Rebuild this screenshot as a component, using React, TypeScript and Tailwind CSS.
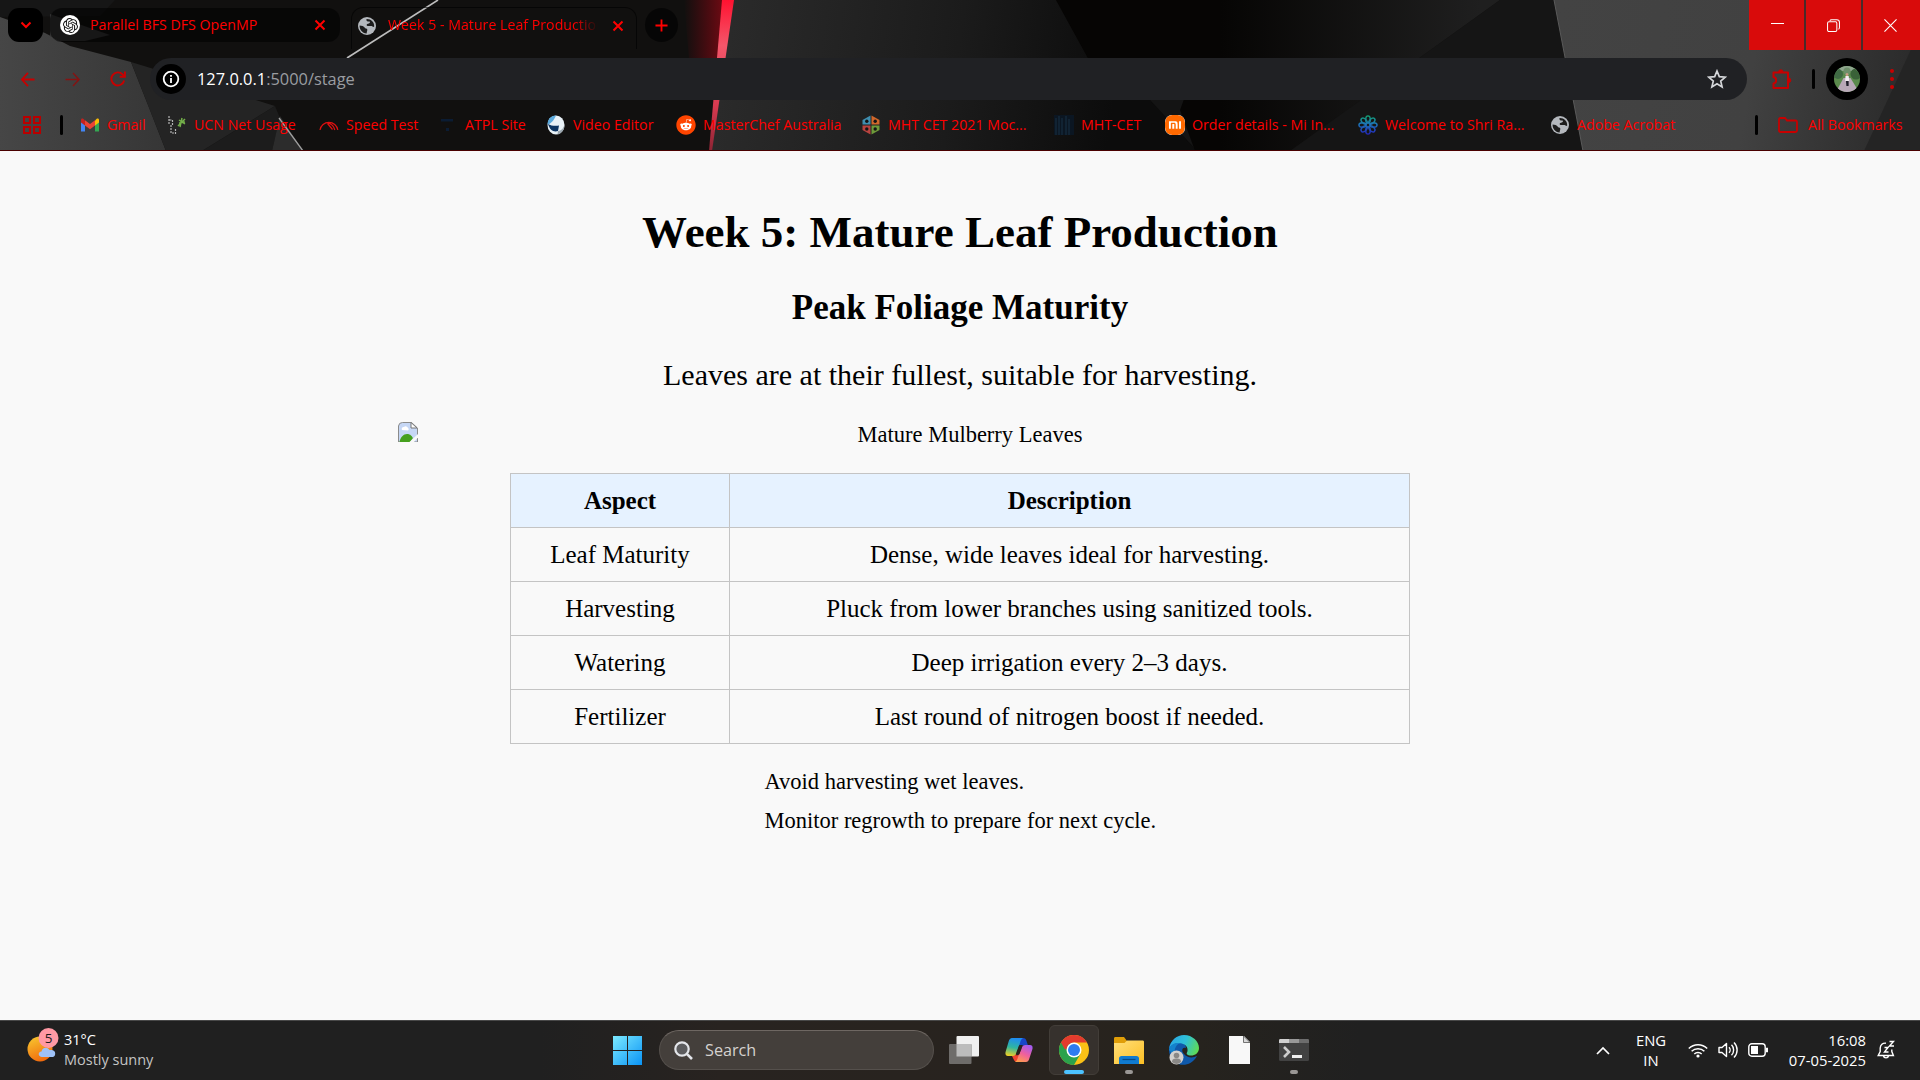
import React from 'react';
import { FaReddit } from 'react-icons/fa';
import { SiXiaomi, SiOpenai } from 'react-icons/si';

function Wallpaper() {
  return (
    <svg className="absolute inset-0 h-full w-full" viewBox="0 0 1920 151" preserveAspectRatio="none">
      <defs>
        <linearGradient id="wl" x1="0" y1="0" x2="1" y2="0">
          <stop offset="0" stopColor="#464646" />
          <stop offset="1" stopColor="#363636" />
        </linearGradient>
        <linearGradient id="wm" gradientUnits="userSpaceOnUse" x1="720" y1="0" x2="1120" y2="60">
          <stop offset="0" stopColor="#2b2b2b" />
          <stop offset="0.6" stopColor="#1b1b1b" />
          <stop offset="1" stopColor="#0c0c0c" />
        </linearGradient>
        <linearGradient id="wr" gradientUnits="userSpaceOnUse" x1="1560" y1="0" x2="1920" y2="60">
          <stop offset="0" stopColor="#434343" />
          <stop offset="0.55" stopColor="#414141" />
          <stop offset="1" stopColor="#2a2a2a" />
        </linearGradient>
        <linearGradient id="wd" gradientUnits="userSpaceOnUse" x1="1220" y1="0" x2="1480" y2="0">
          <stop offset="0" stopColor="#060504" />
          <stop offset="1" stopColor="#1f1f1f" />
        </linearGradient>
        <linearGradient id="glow" x1="0" y1="0" x2="1" y2="0">
          <stop offset="0" stopColor="#a00010" stopOpacity="0" />
          <stop offset="1" stopColor="#b00616" stopOpacity="0.8" />
        </linearGradient>
        <linearGradient id="beam" x1="0" y1="0" x2="0" y2="1">
          <stop offset="0" stopColor="#ff1230" />
          <stop offset="0.3" stopColor="#f4566a" />
          <stop offset="0.7" stopColor="#d83a50" />
          <stop offset="1" stopColor="#8c2434" />
        </linearGradient>
      </defs>
      <rect width="1920" height="151" fill="#11100f" />
      <polygon points="0,17 45,33 70,46 131,62 150,110 166,151 0,151" fill="url(#wl)" />
      <polygon points="0,0 115,0 100,16 0,17" fill="#161616" />
      <polygon points="131,62 275,106 202,151 166,151" fill="#242424" />
      <polygon points="275,106 280,118 272,151 202,151" fill="#1c1c1c" />
      <polygon points="280,116 303,151 272,151" fill="#2c2c2c" />
      <polygon points="50,14 110,35 85,41 60,41 50,36" fill="#333333" />
      <path d="M438 0 L347 58" stroke="#bdbdbd" strokeWidth="1.6" />
      <path d="M279 118 L303 151" stroke="#a0a0a0" strokeWidth="1.3" />
      <polygon points="728,0 1056,0 1090,62 1150,100 1197,151 711,151" fill="url(#wm)" />
      <polygon points="1056,0 1330,0 1230,151 1197,151 1150,100 1090,62" fill="#060504" />
      <polygon points="1150,100 1270,60 1290,151 1197,151" fill="#141414" />
      <polygon points="1220,0 1500,0 1290,151 1195,151 1180,110" fill="url(#wd)" />
      <polygon points="1500,0 1554,0 1583,151 1290,151" fill="#151515" />
      <polygon points="1554,0 1920,0 1920,151 1583,151" fill="url(#wr)" />
      <polygon points="1920,30 1920,151 1864,151" fill="#242424" />
      <path d="M1554 0 L1583 151" stroke="#5a5a5a" strokeWidth="1" />
      <polygon points="684,0 724,0 717,70 690,70" fill="url(#glow)" opacity="0.75" />
      <polygon points="722,0 734,0 712,151 709,151" fill="url(#beam)" />
    </svg>
  );
}

function X({ className = '' }: { className?: string }) {
  return (
    <svg viewBox="0 0 12 12" className={`h-3 w-3 shrink-0 ${className}`} fill="none" stroke="#f00" strokeWidth="2">
      <path d="M1.5 1.5l9 9M10.5 1.5l-9 9" />
    </svg>
  );
}

function Globe() {
  return (
    <svg viewBox="0 0 20 20" className="h-5 w-5 shrink-0">
      <circle cx="10" cy="10" r="9" fill="#b4b8bd" />
      <path d="M2.6 9.4c2 .2 4.4.6 5 2 .5 1.300 2.400.6 2.700 2 .2 1.400-.8 2.600-.6 4.100C5 17 2.300 13 2.600 9.400zM9.500 3c-.5 2 1 2.600 2.600 2.500 1.600 0 .8 2-1 2.200-1.600.2-2 1.700-.6 2.200 2 .6 3.800-.6 5 .6.6.6 1.200.5 1.700.1C17.500 6 14 2.800 9.500 3z" fill="#1c1c1c" />
    </svg>
  );
}

const Sep = ({ className = '' }: { className?: string }) => (
  <div className={`w-[3px] shrink-0 rounded-full bg-black ${className}`} />
);

function TabStrip() {
  return (
    <div className="relative flex h-[50px] items-start pl-2 pt-2">
      <div className="flex h-[34px] w-[35px] items-center justify-center rounded-[11px] bg-black">
        <svg viewBox="0 0 12 8" className="h-2 w-3" fill="none" stroke="#f00" strokeWidth="2">
          <path d="M1.500 1.500L6 6l4.500-4.500" />
        </svg>
      </div>
      <div className="ml-[7px] flex h-[34px] w-[290px] items-center rounded-xl bg-black/55 pl-[10px]">
        <div className="flex h-5 w-5 items-center justify-center rounded-full bg-white">
          <SiOpenai size={15} color="#111" />
        </div>
        <span className="ml-[10px] w-[224px] whitespace-nowrap text-[14.200px]">Parallel BFS DFS OpenMP</span>
        <X />
      </div>
      <div className="ml-[11px] -mt-px flex h-[42px] w-[286px] items-start rounded-t-xl border-x border-t border-black/60 pt-2">
        <div className="ml-[5px]">
          <Globe />
        </div>
        <div className="-mt-px ml-[11px] w-[211px] overflow-hidden whitespace-nowrap text-[14.200px] leading-5 [mask-image:linear-gradient(to_right,black_185px,transparent_210px)]">
          Week 5 - Mature Leaf Production
        </div>
        <X className="ml-[13px] mt-1" />
      </div>
      <div className="ml-2 flex h-[34px] w-[33px] items-center justify-center rounded-full bg-black/60">
        <svg viewBox="0 0 14 14" className="h-[13px] w-[13px]" stroke="#f00" strokeWidth="2">
          <path d="M7 .5v13M.5 7h13" />
        </svg>
      </div>
      <div className="-mt-2 ml-auto flex h-[50px] gap-[2px] bg-[#4a2a2a] text-white">
        <div className="flex w-[55px] items-center justify-center bg-[#d90b0b]">
          <div className="-mt-1 ml-[2px] h-px w-[13px] bg-white" />
        </div>
        <div className="flex w-[55px] items-center justify-center bg-[#d90b0b] pr-px">
          <svg viewBox="0 0 14 14" className="h-[13px] w-[13px]" fill="none" stroke="#fff" strokeWidth="1.100">
            <rect x="0.600" y="3" width="10" height="10.400" rx="1.500" />
            <path d="M3 1.800C3.400 1 4 .7 5 .7h5.500C12.500.700 13.400 1.600 13.400 3.500V9c0 1.200-.3 1.800-1 2.200" />
          </svg>
        </div>
        <div className="flex w-[57px] items-center justify-center bg-[#d90b0b] pr-[2px]">
          <svg viewBox="0 0 14 14" className="h-[13px] w-[13px]" stroke="#fff" strokeWidth="1.200">
            <path d="M.5.5l13 13M13.500.5l-13 13" />
          </svg>
        </div>
      </div>
    </div>
  );
}

function Toolbar() {
  return (
    <div className="relative flex h-[58px] items-center pl-5">
      <svg viewBox="0 0 16 16" className="h-[15px] w-4" fill="none" stroke="#c80000" strokeWidth="1.900">
        <path d="M8 1L1.500 8 8 15M1.500 8H15" />
      </svg>
      <svg viewBox="0 0 16 16" className="ml-[29px] h-[15px] w-4" fill="none" stroke="#861212" strokeWidth="1.500">
        <path d="M8 1l6.500 7L8 15M14.500 8H0" />
      </svg>
      <svg viewBox="0 0 16 16" className="ml-[29px] h-4 w-4" fill="none" stroke="#c80000" strokeWidth="1.900">
        <path d="M14.200 9.500A6.500 6.500 0 1 1 12.600 3.400L14.300 5.200M14.900 .5V5.700H9.700" />
      </svg>
      <div className="ml-6 flex h-[42px] w-[1597px] items-center rounded-full bg-[#202124] pl-[6px] pr-5">
        <div className="flex h-[30px] w-[30px] items-center justify-center rounded-full bg-black">
          <svg viewBox="0 0 18 18" className="h-[18px] w-[18px]" fill="none" stroke="#fff" strokeWidth="1.800">
            <circle cx="9" cy="9" r="7.300" />
            <path d="M9 8v5M9 5v1.800" />
          </svg>
        </div>
        <div className="ml-[11px] pt-px text-[16.400px] text-[#9a9da1]">
          <span className="text-white">127.0.0.1</span>:5000/stage
        </div>
        <svg viewBox="0 0 20 20" className="ml-auto h-5 w-5" fill="none" stroke="#d5d7da" strokeWidth="1.700">
          <path d="M10 2l2.300 5.600 6 .5-4.600 3.900 1.400 5.900L10 14.800l-5.100 3.100L6.300 12 1.700 8.100l6-.5z" />
        </svg>
      </div>
      <svg viewBox="0 0 22 22" className="ml-[24px] h-[22px] w-[22px]" fill="none" stroke="#c80000" strokeWidth="2">
        <path d="M2.500 4.500H17V20H2.500v-4.500c3.500-.5 3.500-6 0-6.500z" strokeLinejoin="round" />
        <path d="M7.500 4a2.300 2.300 0 0 1 4.600 0zM17.500 10a2.300 2.300 0 0 1 0 4.600z" fill="#c80000" strokeWidth="0.800" />
      </svg>
      <Sep className="ml-[19px] h-5" />
      <div className="ml-[11px] flex h-[42px] w-[42px] items-center justify-center rounded-full bg-black">
        <svg viewBox="0 0 26 26" className="h-[26px] w-[26px]">
          <defs>
            <clipPath id="av">
              <circle cx="13" cy="13" r="13" />
            </clipPath>
          </defs>
          <g clipPath="url(#av)">
            <rect width="26" height="26" fill="#5b8a4d" />
            <rect width="26" height="5" fill="#8fa58e" />
            <circle cx="4" cy="8" r="5" fill="#3f6a44" />
            <circle cx="22" cy="8" r="5.500" fill="#3a6138" />
            <circle cx="13" cy="5" r="3.500" fill="#6d8f6a" />
            <path d="M9.500 12h7L25 26H2z" fill="#b9a9b8" />
            <circle cx="13" cy="8.500" r="1.500" fill="#c89c84" />
            <path d="M11.500 10h3.200l.5 5h-4z" fill="#f3eef2" />
            <path d="M12 15h2.600v5h-2.200z" fill="#20202c" />
          </g>
        </svg>
      </div>
      <div className="ml-[22px] flex flex-col gap-1">
        <i className="h-1 w-1 rounded-full bg-[#c80000]" />
        <i className="h-1 w-1 rounded-full bg-[#c80000]" />
        <i className="h-1 w-1 rounded-full bg-[#c80000]" />
      </div>
    </div>
  );
}

const box = 'h-5 w-5 shrink-0';

const GmailIcon = () => (
  <svg viewBox="0 0 20 20" className={box}>
    <path d="M1 5v11.500h4V9.500z" fill="#4285f4" />
    <path d="M19 5v11.500h-4V9.500z" fill="#34a853" />
    <path d="M15 5.500v5L19 7.500V5c0-2-2-2.500-4 .5z" fill="#fbbc04" />
    <path d="M1 5v2.500l4 3v-5C3 2.500 1 3 1 5z" fill="#c5221f" />
    <path d="M5 5.200v5.300l5 3.700 5-3.700V5.200L10 9z" fill="#ea4335" />
  </svg>
);
const UcnIcon = () => (
  <svg viewBox="0 0 20 20" className={box} fill="none">
    <path d="M2 1v8M2.500 5h3v5M4 10v8h3M8.500 14v5" stroke="#b4b4b4" strokeWidth="1.200" strokeDasharray="2 1" />
    <path d="M15 3l-2 9M12 5l6 4M18 4l-7 7M12 8l6-1" stroke="#74b04a" strokeWidth="1.500" />
  </svg>
);
const SpeedIcon = () => (
  <svg viewBox="0 0 20 20" className={box} fill="none" stroke="#e01010" strokeWidth="1.200">
    <path d="M1 15a9 9 0 0 1 17.800 0M9 8c4 1 6 3.500 6.800 7M8.500 8.500l5 6" />
  </svg>
);
const AtplIcon = () => (
  <svg viewBox="0 0 20 20" className={box} fill="#0b1c33">
    <path d="M3 4h12v2.500H3zM8 13h3v3H8z" />
  </svg>
);
const HelmetIcon = () => (
  <svg viewBox="0 0 20 20" className={box}>
    <ellipse cx="10" cy="10" rx="8.500" ry="9.500" fill="#e8f1f7" />
    <path d="M10 .5C4 .500 1.500 5 1.500 9.500 5 9 8 5 10 .5z" fill="#5aa9dc" />
    <path d="M2 9c3 2 8 2 11 1.500l-1 5.500c-4 1.500-8-.5-10-7z" fill="#0d3563" />
    <path d="M12 16c4-.5 6-3.500 6.500-7 .5 5-2.500 9.500-7 10.500z" fill="#9aa6ae" />
  </svg>
);
const RedditIcon = () => (
  <div className="h-5 w-5 shrink-0 rounded-full bg-[radial-gradient(circle,white_0_9px,transparent_9px)]">
    <FaReddit size={20} color="#ff4500" />
  </div>
);
const HexIcon = () => (
  <svg viewBox="0 0 20 20" className={box}>
    <path d="M9.500.5L1.500 5v4.500h8z" fill="#3f8fb0" />
    <path d="M10.500.5l8 4.500v4.500h-8z" fill="#d0672b" />
    <path d="M9.500 19.500l-8-4.500v-4.500h8z" fill="#b8433f" />
    <path d="M10.500 19.500l8-4.500v-4.500h-8z" fill="#6e9a3a" />
    <g fill="#141414">
      <circle cx="5.800" cy="6.300" r="1.700" />
      <circle cx="14.200" cy="6.300" r="1.700" />
      <circle cx="5.800" cy="14" r="1.700" />
      <circle cx="14.200" cy="14" r="1.700" />
    </g>
  </svg>
);
const BuildingIcon = () => (
  <svg viewBox="0 0 20 20" className={box}>
    <rect width="20" height="20" fill="#0b1622" />
    <path d="M2 3v17M5 1v19M8 3v17M12 1v19M15 4v16" stroke="#15283a" strokeWidth="1.500" />
  </svg>
);
const MiIcon = () => (
  <div className="flex h-5 w-5 shrink-0 items-center justify-center overflow-hidden rounded-[7px] bg-white">
    <SiXiaomi size={20} color="#ff6900" />
  </div>
);
const ShriIcon = () => (
  <svg viewBox="0 0 20 20" className={box} fill="none" strokeWidth="1.500">
    <defs>
      <linearGradient id="sh" gradientUnits="userSpaceOnUse" x1="0" y1="0" x2="0" y2="20">
        <stop offset="0" stopColor="#12a36a" />
        <stop offset="0.450" stopColor="#1d76b8" />
        <stop offset="1" stopColor="#2420b8" />
      </linearGradient>
      <mask id="petals">
        <g stroke="#fff" fill="none" strokeWidth="1.400">
          {[0, 45, 90, 135, 180, 225, 270, 315].map((a) => (
            <ellipse key={a} cx="10" cy="4.500" rx="2.300" ry="3.600" transform={`rotate(${a} 10 10)`} />
          ))}
        </g>
      </mask>
    </defs>
    <rect width="20" height="20" fill="url(#sh)" mask="url(#petals)" />
  </svg>
);

const bookmarks: { w: string; label: string; icon: React.ReactNode }[] = [
  { w: 'w-[87px]', label: 'Gmail', icon: <GmailIcon /> },
  { w: 'w-[152px]', label: 'UCN Net Usage', icon: <UcnIcon /> },
  { w: 'w-[119px]', label: 'Speed Test', icon: <SpeedIcon /> },
  { w: 'w-[108px]', label: 'ATPL Site', icon: <AtplIcon /> },
  { w: 'w-[130px]', label: 'Video Editor', icon: <HelmetIcon /> },
  { w: 'w-[185px]', label: 'MasterChef Australia', icon: <RedditIcon /> },
  { w: 'w-[193px]', label: 'MHT CET 2021 Moc...', icon: <HexIcon /> },
  { w: 'w-[111px]', label: 'MHT-CET', icon: <BuildingIcon /> },
  { w: 'w-[193px]', label: 'Order details - Mi In...', icon: <MiIcon /> },
  { w: 'w-[192px]', label: 'Welcome to Shri Ra...', icon: <ShriIcon /> },
  { w: 'w-[140px]', label: 'Adobe Acrobat', icon: <Globe /> },
];

function Bookmarks() {
  return (
    <div className="relative flex h-[43px] items-center border-b border-[#4a0000] pb-[8px] pl-[23px] text-[14.200px]">
      <svg viewBox="0 0 18 18" className="h-[18px] w-[18px]" fill="none" stroke="#b80000" strokeWidth="2">
        <path d="M1 1h6v6H1zM11 1h6v6h-6zM1 11h6v6H1zM11 11h6v6h-6z" />
      </svg>
      <Sep className="ml-[19px] mr-[17px] h-5" />
      {bookmarks.map((b) => (
        <div key={b.label} className={`flex shrink-0 items-center gap-[7px] whitespace-nowrap ${b.w}`}>
          {b.icon}
          <span className="pb-px">{b.label}</span>
        </div>
      ))}
      <Sep className="ml-[65px] mr-[20px] h-5" />
      <svg viewBox="0 0 20 16" className="h-4 w-5" fill="none" stroke="#c80000" strokeWidth="1.800">
        <path d="M1 2.500C1 1.500 1.500 1 2.500 1H7l2 2.500h8.500c1 0 1.500.5 1.500 1.500v8.500c0 1-.5 1.500-1.500 1.500h-15C1.500 15 1 14.500 1 13.500z" />
      </svg>
      <span className="ml-[10px] whitespace-nowrap pb-px">All Bookmarks</span>
    </div>
  );
}

const rows = [
  ['Leaf Maturity', 'Dense, wide leaves ideal for harvesting.'],
  ['Harvesting', 'Pluck from lower branches using sanitized tools.'],
  ['Watering', 'Deep irrigation every 2–3 days.'],
  ['Fertilizer', 'Last round of nitrogen boost if needed.'],
];

function Page() {
  return (
    <main className="flex flex-1 flex-col items-center bg-[#f9f9f9] pt-[55px] font-['Liberation_Serif',serif] text-black">
      <h1 className="text-[45px] font-bold leading-[52px]">Week 5: Mature Leaf Production</h1>
      <h2 className="mt-[30px] text-[35px] font-bold leading-10">Peak Foliage Maturity</h2>
      <p className="mt-[30px] text-[30px] leading-[34px]">Leaves are at their fullest, suitable for harvesting.</p>
      <div className="mt-[30px] flex h-[26px] w-[1124px] items-start">
        <svg viewBox="0 0 20 20" className="h-5 w-5">
          <path d="M.5 20V4a4 4 0 0 1 4-3.500h9l6 5.500v14z" fill="#c6d7f5" stroke="#8b8b8b" strokeWidth="1" />
          <path d="M4 8a2 2 0 0 1 2-3 2.500 2.500 0 0 1 4 1 1.500 1.500 0 0 1 0 2.500z" fill="#fff" />
          <path d="M1.500 20c1-5 4-8 7.500-8s5 2.500 6 4l-3 4z" fill="#46a01e" />
          <path d="M11 20.500L20 12v3.500l-4.500 5z" fill="#f9f9f9" />
          <path d="M13 .5V6h6z" fill="#fff" stroke="#777" strokeWidth="1" />
        </svg>
        <span className="flex-1 text-center text-[22.500px] leading-[26px]">Mature Mulberry Leaves</span>
      </div>
      <div className="mt-[25px] w-[900px] border-x border-t border-[#c4c4c4] text-center text-[25px] leading-[53px]">
        <div className="flex border-b border-[#c4c4c4] bg-[#e6f2ff] font-bold">
          <div className="w-[219px] border-r border-[#c4c4c4]">Aspect</div>
          <div className="flex-1">Description</div>
        </div>
        {rows.map(([a, d]) => (
          <div key={a} className="flex border-b border-[#c4c4c4]">
            <div className="w-[219px] border-r border-[#c4c4c4]">{a}</div>
            <div className="flex-1">{d}</div>
          </div>
        ))}
      </div>
      <ul className="mt-[18px] w-[391px] whitespace-nowrap text-[22.500px] leading-[39px]">
        <li>Avoid harvesting wet leaves.</li>
        <li>Monitor regrowth to prepare for next cycle.</li>
      </ul>
    </main>
  );
}

const CopilotIcon = () => (
  <svg viewBox="0 0 28 26" className="h-[26px] w-7">
    <defs>
      <linearGradient id="c1" x1="0.400" y1="0" x2="0.200" y2="1">
        <stop offset="0" stopColor="#1f8df0" />
        <stop offset="0.500" stopColor="#2fb6a0" />
        <stop offset="1" stopColor="#f3d021" />
      </linearGradient>
      <linearGradient id="c2" x1="0.700" y1="0" x2="0.200" y2="1">
        <stop offset="0" stopColor="#a45cf0" />
        <stop offset="0.500" stopColor="#f0609c" />
        <stop offset="1" stopColor="#ffa04a" />
      </linearGradient>
    </defs>
    <path d="M13 1h5c2 0 3 1 3.500 3l1.500 4.500h-9z" fill="#1746c9" />
    <path d="M6 17h8l1 8h-3c-2 0-3-1.500-3.500-3z" fill="#f0452f" />
    <path d="M7 1h11c-2 1-2.500 3-3 5l-3.500 9c-.6 2.500-1.500 4-4 4H3c-2.500 0-3-2-2.300-4.500L3.500 5C4.300 2 5.500 1 7 1z" fill="url(#c1)" />
    <path d="M21 25H10c2-1 2.500-3 3-5l3.500-8c.6-2.500 1.500-4 4-4H25c2.500 0 3 2 2.300 4.500L24.500 21c-.8 3-2 4-3.500 4z" fill="url(#c2)" />
    <path d="M14.500 8h3.200c-1 1-1.300 2.500-1.700 4l-1.500 4.500c-.4 1-1 1.700-2 1.700h-2c1-1 1.200-2 1.600-3.200l1.600-5c.2-.8.400-1.400.8-2z" fill="#28231e" />
  </svg>
);
const ChromeIcon = () => (
  <svg viewBox="0 0 30 30" className="h-[30px] w-[30px]">
    <circle cx="15" cy="15" r="15" fill="#fbc116" />
    <path d="M2 7.500A15 15 0 0 0 15 30l6.500-11.200L15 15 15 7.500z" fill="#2ba24c" />
    <path d="M2 7.500A15 15 0 0 1 28 7.500H15c-4 0-7 3-7.300 6.500L6 14.400z" fill="#e33b2e" />
    <circle cx="15" cy="15" r="7.500" fill="#fff" />
    <circle cx="15" cy="15" r="6" fill="#2e7cf0" />
  </svg>
);
const FolderIcon = () => (
  <svg viewBox="0 0 30 27" className="h-[27px] w-[30px]">
    <defs>
      <linearGradient id="fo" x1="0" y1="0" x2="1" y2="1">
        <stop offset="0" stopColor="#ffdf7a" />
        <stop offset="1" stopColor="#fcbf24" />
      </linearGradient>
    </defs>
    <path d="M0 1.500C0 .5.500 0 1.500 0H10l3 4v4H0z" fill="#e09e08" />
    <path d="M0 6h10.500L13 3.500h15.500c1 0 1.500.5 1.500 1.500v22H0z" fill="url(#fo)" />
    <path d="M5 27v-5.500C5 20 6 19 7.500 19h15c1.500 0 2.500 1 2.500 2.500V27z" fill="#107bd0" />
    <path d="M8.500 22.500h13" stroke="#074a86" strokeWidth="1.200" />
  </svg>
);
const EdgeIcon = () => (
  <svg viewBox="0 0 30 30" className="h-[30px] w-[30px]">
    <defs>
      <linearGradient id="e1" x1="0" y1="0.300" x2="1" y2="0.600">
        <stop offset="0" stopColor="#2aa7e4" />
        <stop offset="0.500" stopColor="#2fc0d8" />
        <stop offset="1" stopColor="#5fdc55" />
      </linearGradient>
    </defs>
    <path d="M0 15C0 8 4 5 9 6c5 .5 8 4 8 7-4-1.500-5 3-2 6 3 3.500 8 4.500 13 2C24 28 18 30.500 12 29.700 5 28.500 0 22 0 15z" fill="#0f59ab" />
    <path d="M.2 13.500C1.500 5 8 0 15 0c8.500 0 15 6.500 15 13 0 5-4 7.500-8 7.500-3.500 0-5-1.500-4-3 1.500-2.500.5-8-6-9.200C7 7.500 2 9.500.2 13.500z" fill="url(#e1)" />
    <path d="M0 15c1-5.500 6-8 11-6.800-5 1.800-7 8-4 14z" fill="#1482cc" />
    <circle cx="7.500" cy="22.500" r="7" fill="#d2d0ce" />
    <circle cx="7.500" cy="20.500" r="2.800" fill="#8a8886" />
    <path d="M3 27c0-3 2-3.500 4.500-3.500S12 24 12 27c-2.500 2.500-6.500 2.500-9 0z" fill="#8a8886" />
  </svg>
);
const FileIcon = () => (
  <svg viewBox="0 0 21 28" className="h-7 w-[21px]">
    <path d="M0 0h15l6 6v22H0z" fill="#f8f8f8" />
    <path d="M14.500 0v6.500H21z" fill="#d8d8d8" stroke="#555" strokeWidth="0.800" />
  </svg>
);
const TerminalIcon = () => (
  <svg viewBox="0 0 30 22" className="h-[22px] w-[30px]">
    <rect width="30" height="22" rx="1.500" fill="#424242" />
    <path d="M0 4V1.500C0 .5.500 0 1.500 0H10v4z" fill="#d0d0d0" />
    <path d="M10 0h10v4H10z" fill="#999" />
    <path d="M20 0h8.500c1 0 1.500.5 1.500 1.500V4H20z" fill="#6d6d6d" />
    <path d="M5 8l5 5-5 5" fill="none" stroke="#ccc" strokeWidth="2.600" />
    <path d="M13 17.500h10" stroke="#f0f0f0" strokeWidth="3" />
  </svg>
);

function TaskItem({ children, state = '' }: { children: React.ReactNode; state?: string }) {
  return (
    <div
      className={`relative flex h-[50px] w-[50px] shrink-0 items-center justify-center rounded-md ${
        state === 'active' ? 'border border-[#423d38] bg-[#36312d]' : ''
      }`}
    >
      {children}
      {state === 'active' && <i className="absolute bottom-0 h-1 w-5 rounded-full bg-[#4cc2ff]" />}
      {state === 'open' && <i className="absolute bottom-px h-1 w-2 rounded-full bg-[#9a9795]" />}
    </div>
  );
}

function Taskbar() {
  return (
    <footer className="flex h-[60px] shrink-0 items-center border-t border-[#484848] bg-[linear-gradient(90deg,#202020_0,#202020_540px,#282320_720px,#28231e_1080px,#26231e_1200px,#202020_1360px)] pb-px text-white">
      <div className="flex w-[610px] items-center pl-[27px]">
        <div className="relative -mt-1 h-[40px] w-[34px]">
          <svg viewBox="0 0 34 40" className="h-full w-full">
            <defs>
              <linearGradient id="sun" x1="0.200" y1="0" x2="0.600" y2="1">
                <stop offset="0" stopColor="#f8c52e" />
                <stop offset="1" stopColor="#f0680c" />
              </linearGradient>
            </defs>
            <circle cx="13" cy="21" r="12.500" fill="url(#sun)" />
            <path d="M15 29c-4-.5-4.500-5-.5-5.500C15 19.500 20 18 22.500 22c4-.5 6.500 1.500 5.500 5-.5 1.500-1.500 2-3 2z" fill="#9fc2f7" />
            <circle cx="21.500" cy="10" r="10" fill="#ff99a4" />
          </svg>
          <span className="absolute left-[11px] top-0 w-[21px] text-center text-[13.500px] leading-5 text-[#1a1a1a]">5</span>
        </div>
        <div className="ml-[3px] text-[14.500px] leading-5">
          <div>31°C</div>
          <div className="text-[#c4c4c4]">Mostly sunny</div>
        </div>
      </div>
      <svg viewBox="0 0 29 29" className="ml-[3px] h-[29px] w-[29px] shrink-0">
        <defs>
          <linearGradient id="win" gradientUnits="userSpaceOnUse" x1="0" y1="0" x2="29" y2="29">
            <stop offset="0" stopColor="#7ceaff" />
            <stop offset="1" stopColor="#0a93f5" />
          </linearGradient>
        </defs>
        <path d="M0 0h14v14H0zM15 0h14v14H15zM0 15h14v14H0zM15 15h14v14H15z" fill="url(#win)" />
      </svg>
      <div className="ml-[17px] flex h-10 w-[275px] shrink-0 items-center rounded-full border border-[#55504c] border-t-[#6e6762] bg-[#443f3b] pl-[14px]">
        <svg viewBox="0 0 19 19" className="h-[19px] w-[19px]" fill="none" stroke="#e4e6ea" strokeWidth="2.200">
          <circle cx="8" cy="8" r="6.700" fill="#5c5c5e" />
          <path d="M12.800 12.800L18 18" strokeWidth="2.600" />
        </svg>
        <span className="ml-3 pt-px text-[16.200px] text-[#d5d2cf]">Search</span>
      </div>
      <div className="ml-[5px] flex items-center gap-[5px]">
        <TaskItem>
          <svg viewBox="0 0 30 28" className="h-7 w-[30px]">
            <rect x="7.500" y="0" width="22.500" height="20.500" rx="1" fill="#f0f0f0" />
            <rect x="0" y="8" width="22.500" height="20" rx="1" fill="#6e6c6a" />
            <rect x="7.500" y="8" width="15" height="12.500" fill="#bcbcbc" />
          </svg>
        </TaskItem>
        <TaskItem><CopilotIcon /></TaskItem>
        <TaskItem state="active"><ChromeIcon /></TaskItem>
        <TaskItem state="open"><FolderIcon /></TaskItem>
        <TaskItem><EdgeIcon /></TaskItem>
        <TaskItem><FileIcon /></TaskItem>
        <TaskItem state="open"><TerminalIcon /></TaskItem>
      </div>
      <div className="ml-auto flex items-center pr-[25px] text-[14.800px] leading-5">
        <svg viewBox="0 0 14 9" className="h-[9px] w-[14px]" fill="none" stroke="#fff" strokeWidth="1.700">
          <path d="M1 8l6-6 6 6" />
        </svg>
        <div className="-mt-px ml-[24px] w-[34px] text-center">
          <div>ENG</div>
          <div>IN</div>
        </div>
        <svg viewBox="0 0 20 16" className="ml-[20px] h-4 w-5" fill="none" stroke="#fff" strokeWidth="1.500">
          <path d="M.8 6.500a13 13 0 0 1 18.400 0M3.600 9.300a9 9 0 0 1 12.800 0M6.300 12a5.300 5.300 0 0 1 7.400 0" />
          <circle cx="10" cy="14" r="1.600" fill="#fff" stroke="none" />
        </svg>
        <svg viewBox="0 0 20 18" className="ml-[10px] h-[18px] w-5" fill="none" stroke="#fff" strokeWidth="1.400">
          <path d="M1 6.500h3L8.500 2.500v13L4 11.500H1z" strokeLinejoin="round" />
          <path d="M11 6.200a4 4 0 0 1 0 5.600M13.500 3.800a7.400 7.400 0 0 1 0 10.400M16 1.500a10.600 10.600 0 0 1 0 15" />
        </svg>
        <svg viewBox="0 0 20 14" className="ml-[10px] h-[14px] w-5" fill="none" stroke="#fff" strokeWidth="1.400">
          <rect x="0.800" y="0.800" width="16.400" height="12.400" rx="3" />
          <rect x="3" y="3" width="7" height="8" fill="#fff" stroke="none" />
          <path d="M19 4.800v4.400" strokeWidth="2" />
        </svg>
        <div className="-mt-px ml-[20px] w-[78px] whitespace-nowrap text-right">
          <div>16:08</div>
          <div>07-05-2025</div>
        </div>
        <svg viewBox="0 0 18 20" className="ml-[11px] h-5 w-[18px]" fill="none" stroke="#fff" strokeWidth="1.400">
          <path d="M9 3.200C5.500 2.800 3.500 5 3.200 8v3.500L1.200 15.500h15.200l-1.600-4V9.500M6.500 16c.5 2.500 4.500 2.500 5 0" />
          <path d="M7.500 7.500h3.500l-3.500 4.500h4M12.500 1.500h4l-4 4.500h4.500" />
        </svg>
      </div>
    </footer>
  );
}

export default function App() {
  return (
    <div className="flex h-[1080px] w-[1920px] flex-col overflow-hidden font-['Open_Sans','Noto_Sans',sans-serif]">
      <header className="relative h-[151px] shrink-0 overflow-hidden text-[#ff0000]">
        <Wallpaper />
        <TabStrip />
        <Toolbar />
        <Bookmarks />
      </header>
      <Page />
      <Taskbar />
    </div>
  );
}
